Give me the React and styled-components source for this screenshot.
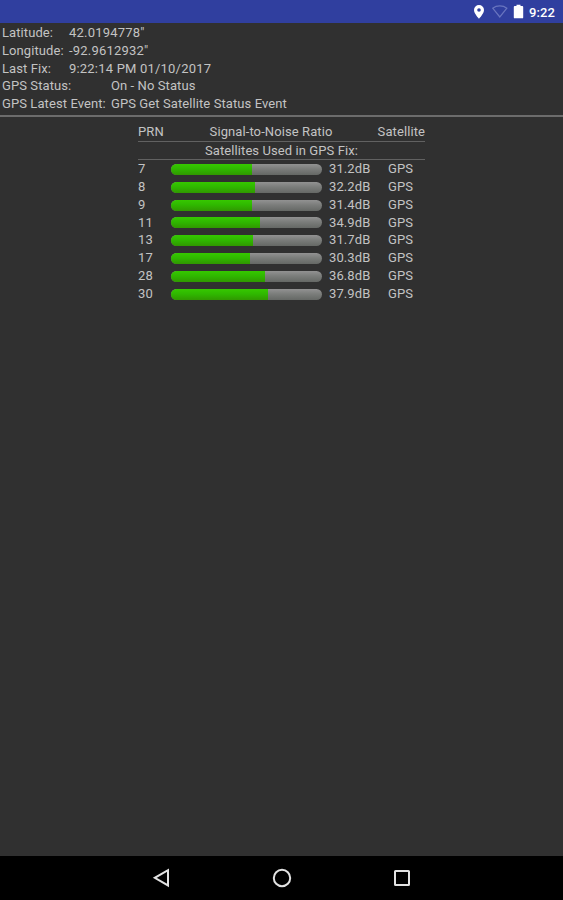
import React from "react";
import styled, { createGlobalStyle } from "styled-components";

const GlobalStyle = createGlobalStyle`
  * { box-sizing: border-box; }
  body { margin: 0; background: #303030; }
`;

const Screen = styled.div`
  display: flex;
  flex-direction: column;
  width: 563px;
  height: 900px;
  overflow: hidden;
  background: #303030;
  color: #c3c3c3;
  font: 400 13px/17.8px Roboto, sans-serif;
  letter-spacing: 0.09px;
  white-space: nowrap;
`;

const StatusBar = styled.header`
  display: flex;
  flex: none;
  justify-content: flex-end;
  height: 23px;
  padding-right: 7px;
  background: #303f9f;
`;

const StatusIcons = styled.svg`
  width: 54px;
  height: 23px;
`;

const Clock = styled.span`
  width: 27px;
  margin-left: 2px;
  color: #fff;
  font-size: 13px;
  font-weight: 500;
  line-height: 25px;
`;

const FixInfo = styled.section`
  flex: none;
  height: 94px;
  padding: 1px 2px 0;
  border-bottom: 2px solid #6c6c6c;
`;

const InfoRow = styled.div`
  display: grid;
  grid-template-columns: ${(p) => p.$label}px auto;
  height: 17.8px;
`;

const InfoValue = styled.span`
  letter-spacing: ${(p) => (p.$numeric ? "0.2px" : "inherit")};
`;

const Content = styled.main`
  flex: 1;
  padding-top: 5.5px;
`;

const Table = styled.section`
  width: 287px;
  margin-left: 138px;
`;

const HeaderRow = styled.div`
  display: grid;
  grid-template-columns: 33px 200px 54px;
  height: 19px;
  border-bottom: 1px solid #616161;
  line-height: 18.5px;
`;

const HeaderCell = styled.span`
  text-align: ${(p) => p.$align || "left"};
`;

const GroupTitle = styled.div`
  height: 18.8px;
  border-bottom: 1px solid #616161;
  text-align: center;
  line-height: 18.6px;
`;

const SatelliteRow = styled.div`
  display: grid;
  grid-template-columns: 33px 151px 7px 59px auto;
  align-items: center;
  height: 17.8px;
`;

const Track = styled.div`
  height: 11px;
  overflow: hidden;
  border-radius: 5.5px;
  background: linear-gradient(#929292, #7b7d7b 45%, #656865);
`;

const Level = styled.div`
  height: 100%;
  background: linear-gradient(#36c800, #2fb800 45%, #309800);
`;

const Reading = styled.span`
  grid-column: 4;
  line-height: 18.6px;
`;

const Cell = styled.span`
  line-height: 18.6px;
`;

const NavBar = styled.nav`
  display: flex;
  flex: none;
  align-items: center;
  justify-content: center;
  gap: 96px;
  height: 44px;
  background: #000;
`;

const NavIcon = styled.svg`
  width: 24px;
  height: 24px;
  fill: none;
  stroke: #e2e2e2;
  stroke-width: 2;
`;

const info = [
  { label: "Latitude:", value: '42.0194778"', width: 67, numeric: true },
  { label: "Longitude:", value: '-92.9612932"', width: 67, numeric: true },
  { label: "Last Fix:", value: "9:22:14 PM 01/10/2017", width: 67, numeric: true },
  { label: "GPS Status:", value: "On - No Status", width: 109 },
  { label: "GPS Latest Event:", value: "GPS Get Satellite Status Event", width: 109 },
];

const satellites = [
  [7, "31.2", 81],
  [8, "32.2", 84],
  [9, "31.4", 81],
  [11, "34.9", 89],
  [13, "31.7", 81.5],
  [17, "30.3", 78.5],
  [28, "36.8", 94],
  [30, "37.9", 97],
];

export default function App() {
  return (
    <>
      <GlobalStyle />
      <Screen>
        <StatusBar>
          <StatusIcons viewBox="0 0 54 23">
            <path
              fill="#fff"
              fillRule="evenodd"
              d="M6 5a5 5 0 0 0-5 5c0 3.6 5 8.7 5 8.7s5-5.1 5-8.7a5 5 0 0 0-5-5Zm0 3.2a1.8 1.8 0 1 1 0 3.6a1.8 1.8 0 0 1 0-3.6Z"
            />
            <path
              fill="none"
              stroke="#6975bf"
              strokeWidth="1.2"
              d="M19.7 8.2C23.8 5.2 29.8 5.2 33.9 8.2L26.8 17Z"
            />
            <path
              fill="#fff"
              d="M43.5 4.8h4v1.3h1.8q.9 0 .9.9v10.4q0 .9-.9.9h-7.6q-.9 0-.9-.9V7q0-.9.9-.9h1.8Z"
            />
          </StatusIcons>
          <Clock>9:22</Clock>
        </StatusBar>
        <FixInfo>
          {info.map((row) => (
            <InfoRow key={row.label} $label={row.width}>
              <span>{row.label}</span>
              <InfoValue $numeric={row.numeric}>{row.value}</InfoValue>
            </InfoRow>
          ))}
        </FixInfo>
        <Content>
          <Table>
            <HeaderRow>
              <HeaderCell>PRN</HeaderCell>
              <HeaderCell $align="center">Signal-to-Noise Ratio</HeaderCell>
              <HeaderCell $align="right">Satellite</HeaderCell>
            </HeaderRow>
            <GroupTitle>Satellites Used in GPS Fix:</GroupTitle>
            {satellites.map(([prn, snr, width]) => (
              <SatelliteRow key={prn}>
                <Cell>{prn}</Cell>
                <Track>
                  <Level style={{ width }} />
                </Track>
                <Reading>{snr}dB</Reading>
                <Cell>GPS</Cell>
              </SatelliteRow>
            ))}
          </Table>
        </Content>
        <NavBar>
          <NavIcon viewBox="0 0 24 24">
            <path d="M18 4.2v15.2L4.8 11.8Z" />
          </NavIcon>
          <NavIcon viewBox="0 0 24 24">
            <circle cx="12" cy="12" r="8.2" />
          </NavIcon>
          <NavIcon viewBox="0 0 24 24">
            <rect x="5" y="5" width="14" height="14" rx=".5" />
          </NavIcon>
        </NavBar>
      </Screen>
    </>
  );
}
